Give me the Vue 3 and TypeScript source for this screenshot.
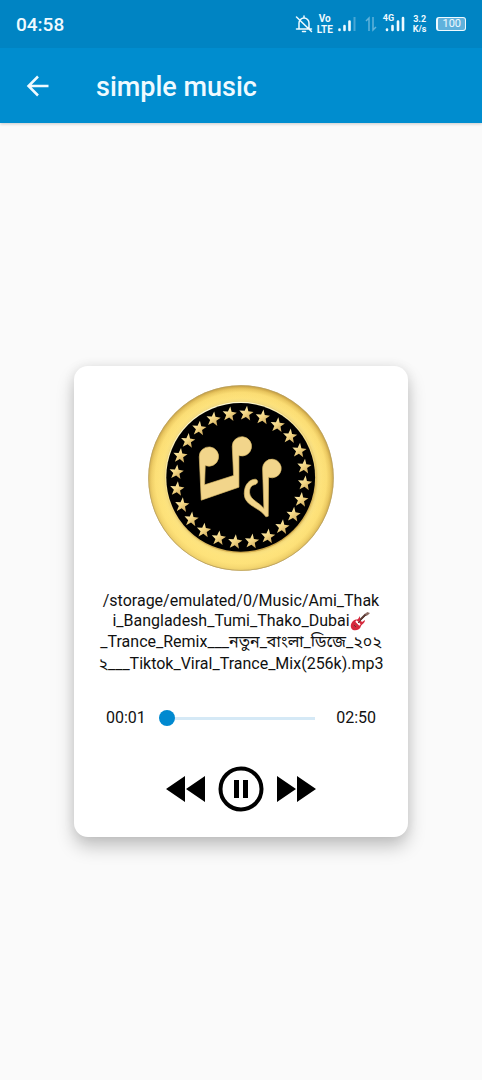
<script setup lang="ts">
import { ref, computed } from 'vue'

const elapsed = ref(1)
const duration = 170
const playing = ref(true)

function clock(total: number): string {
  const minutes = Math.floor(total / 60)
  const seconds = Math.floor(total % 60)
  return String(minutes).padStart(2, '0') + ':' + String(seconds).padStart(2, '0')
}

const elapsedLabel = computed(() => clock(elapsed.value))
const durationLabel = clock(duration)

interface Star {
  x: number
  y: number
}

const stars: Star[] = Array.from({ length: 24 }, (_, i) => {
  const angle = ((5 + i * 15) * Math.PI) / 180
  return {
    x: Math.round(299 + 208 * Math.sin(angle)),
    y: Math.round(298 - 208 * Math.cos(angle)),
  }
})
</script>

<template>
  <div class="screen">
    <header class="top">
      <div class="status">
        <time class="clock">04:58</time>
        <div class="indicators">
          <svg class="bell" width="18" height="18" viewBox="0 0 18 18" aria-label="Notifications muted">
            <path d="M4 14V8a5 5 0 0 1 10 0v6M1.500 14h15M7.500 16.500h3M9 1v2M1.500 2l15 14.500" fill="none" stroke="currentColor" stroke-width="1.500" stroke-linecap="round" />
          </svg>
          <span class="stack volte"><span>Vo</span><span>LTE</span></span>
          <svg width="20" height="16" viewBox="0 0 20 16" aria-label="Signal 1">
            <path d="M2.500 13.500v.5M7.500 10v4M12.500 5.500v8.500" stroke="currentColor" stroke-width="2.600" stroke-linecap="round" />
            <path d="M17.500 1v14" stroke="currentColor" stroke-width="2" opacity="0.300" />
          </svg>
          <svg class="data" width="12" height="16" viewBox="0 0 12 16" aria-label="Mobile data">
            <path d="M4 15V2L1 5M8 1v13l3-3" fill="none" stroke="currentColor" stroke-width="1.500" />
          </svg>
          <span class="cell">
            <span class="gen">4G</span>
            <svg width="20" height="16" viewBox="0 0 20 16" aria-label="Signal 2">
              <path d="M2 13.500v.5M7.500 10v4M13 5.500v8.500M18 2v12" stroke="currentColor" stroke-width="2.600" stroke-linecap="round" />
            </svg>
          </span>
          <span class="stack speed"><span>3.2</span><span>K/s</span></span>
          <span class="battery">100</span>
        </div>
      </div>
      <div class="toolbar">
        <button class="back" type="button" aria-label="Back">
          <svg width="24" height="24" viewBox="0 0 24 24">
            <path d="M22.500 12H3M12 2.500 2.500 12 12 21.500" fill="none" stroke="currentColor" stroke-width="2.500" />
          </svg>
        </button>
        <h1 class="title">simple music</h1>
      </div>
    </header>

    <main class="stage">
      <section class="card">
        <svg class="cover" viewBox="0 0 600 600" role="img" aria-label="Golden music medallion">
          <defs>
            <radialGradient id="rim" cx="300" cy="300" r="300" gradientUnits="userSpaceOnUse">
              <stop offset="0.800" stop-color="#d9b552" />
              <stop offset="0.830" stop-color="#f5dc80" />
              <stop offset="0.860" stop-color="#fde17a" />
              <stop offset="0.920" stop-color="#fbdc72" />
              <stop offset="0.960" stop-color="#e8c45c" />
              <stop offset="1" stop-color="#bd9338" />
            </radialGradient>
            <linearGradient id="glow" x1="0.700" y1="0" x2="0.400" y2="1">
              <stop offset="0" stop-color="#fff0a0" stop-opacity="0" />
              <stop offset="0.500" stop-color="#ffe680" stop-opacity="0.200" />
              <stop offset="1" stop-color="#ffe57f" stop-opacity="0.700" />
            </linearGradient>
            <linearGradient id="lip" x1="0.300" y1="0" x2="0.700" y2="1">
              <stop offset="0" stop-color="#fffbd8" />
              <stop offset="0.450" stop-color="#f6df8a" />
              <stop offset="1" stop-color="#c8a044" />
            </linearGradient>
            <linearGradient id="gold" x1="0" y1="0" x2="1" y2="1">
              <stop offset="0" stop-color="#fff3bd" />
              <stop offset="0.500" stop-color="#f3d684" />
              <stop offset="1" stop-color="#c09a52" />
            </linearGradient>
          </defs>
          <circle cx="300" cy="300" r="299" fill="url(#rim)" />
          <circle cx="300" cy="300" r="298" fill="url(#glow)" stroke="#b4a066" stroke-width="2" />
          <circle cx="299" cy="298" r="244" fill="url(#lip)" />
          <circle cx="299" cy="298" r="240" fill="#000" />
          <path
            v-for="(star, index) in stars"
            :key="index"
            :transform="`translate(${star.x} ${star.y}) rotate(6)`"
            d="M0-24 6-7 23-6 10 5 15 22 0 12-15 22-10 5-23-6-6-7Z"
            fill="url(#gold)"
          />
          <g fill="#f2d58b" stroke="#d9b968" stroke-width="2" transform="matrix(1.075 0 0 1.075 -26 -23)">
            <path d="M178 237A29 29 0 1 1 196 263L194 321 281 293 277 206A29 29 0 1 1 297 233L297 328 184 367Z" />
            <path d="M368 272A28 28 0 1 1 386 298L385 415 378 417C360 388 313 385 313 348 313 320 328 305 346 304 356 306 355 316 347 320 335 321 328 330 329 345 331 366 357 373 372 392Z" />
          </g>
        </svg>

        <p class="path">
          <span class="latin">/storage/emulated/0/Music/Ami_Thak</span>
          <span class="latin">i_Bangladesh_Tumi_Thako_Dubai<svg class="guitar" width="20" height="20" viewBox="0 0 20 20" role="img" aria-label="Guitar">
            <path d="M9 10 16 3" stroke="#5c3a35" stroke-width="2" />
            <path d="M15 4 17 1 20 2 18 4 16 5Z" fill="#8a6a62" />
            <path d="M3 10C5 8 7 9 8 8L10 5 10 9 12 11 15 9C15 12 12 13 11 15 10 19 6 20 3 19 0 17 0 13 3 10Z" fill="#d5283c" />
            <path d="M6 10 10 14" stroke="#fff" stroke-width="2" />
            <path d="M8 12 16 4" stroke="#5c3a35" stroke-width="1" />
            <path d="M4 14 6 16" stroke="#5c3a35" stroke-width="1" />
          </svg></span>
          <span>_Trance_Remix___নতুন_বাংলা_ডিজে_২০২</span>
          <span>২___Tiktok_Viral_Trance_Mix(256k).mp3</span>
        </p>

        <div class="progress">
          <span>{{ elapsedLabel }}</span>
          <input v-model.number="elapsed" class="seek" type="range" min="1" :max="duration" aria-label="Playback position">
          <span>{{ durationLabel }}</span>
        </div>

        <div class="controls">
          <button type="button" aria-label="Rewind">
            <svg width="40" height="28" viewBox="0 0 40 28"><path d="M0 14 19 1V27ZM20 14 39 1V27Z" /></svg>
          </button>
          <button type="button" :aria-label="playing ? 'Pause' : 'Play'" @click="playing = !playing">
            <svg width="46" height="46" viewBox="0 0 46 46">
              <circle cx="23" cy="23" r="20.500" fill="none" stroke="#000" stroke-width="4" />
              <path v-if="playing" d="M16 14h5v18h-5ZM25 14h5v18h-5Z" />
              <path v-else d="M18 13 33 23 18 33Z" />
            </svg>
          </button>
          <button type="button" aria-label="Fast forward">
            <svg width="40" height="28" viewBox="0 0 40 28"><path d="M40 14 21 1V27ZM20 14 1 1V27Z" /></svg>
          </button>
        </div>
      </section>
    </main>
  </div>
</template>

<style>
body {
  background: #fafafa;
}
</style>

<style scoped>
.screen {
  min-height: 100vh;
  display: flex;
  flex-direction: column;
  background: #fafafa;
  color: #111;
  font-family: Roboto, "Noto Sans", "Noto Sans Bengali", sans-serif;
}
.top {
  background: #008dcf;
  color: #effaff;
  box-shadow: 0 1px 3px rgba(0, 0, 0, 0.2);
}
.status {
  height: 48px;
  padding: 0 16px;
  display: flex;
  align-items: center;
  justify-content: space-between;
  background: #0084c3;
}
.clock {
  font-size: 19px;
  font-weight: 500;
}
.indicators {
  display: flex;
  align-items: center;
  gap: 4px;
}
.stack {
  display: flex;
  flex-direction: column;
  align-items: center;
  font-weight: 700;
}
.volte {
  font-size: 10px;
  line-height: 11px;
}
.speed {
  margin: 0 6px 0 4px;
  font-size: 9px;
  line-height: 10px;
}
.data {
  margin: 0 4px;
  opacity: 0.4;
}
.cell {
  position: relative;
  display: flex;
}
.gen {
  position: absolute;
  left: -2px;
  top: -3px;
  font-size: 9px;
  line-height: 10px;
  font-weight: 700;
}
.battery {
  padding: 0 4px;
  border: 1px solid currentColor;
  border-left-width: 2px;
  border-radius: 3px;
  background: #5fb1dc;
  font-size: 11px;
  line-height: 12px;
}
.toolbar {
  height: 75px;
  padding: 0 26px;
  display: flex;
  align-items: center;
  gap: 46px;
}
button {
  padding: 0;
  border: 0;
  background: none;
  color: inherit;
  cursor: pointer;
}
button svg {
  display: block;
}
.title {
  margin: 0;
  padding-top: 2px;
  font-size: 27px;
  line-height: 32px;
  font-weight: 500;
}
.stage {
  flex: 1;
  display: flex;
  align-items: center;
  padding: 0 74px;
}
.card {
  flex: 1;
  min-width: 0;
  padding: 19px 24px 25px;
  display: flex;
  flex-direction: column;
  align-items: center;
  border-radius: 14px;
  background: #fff;
  box-shadow: 0 10px 18px rgba(0, 0, 0, 0.22), 0 0 12px rgba(0, 0, 0, 0.08);
}
.cover {
  width: 186px;
  height: 186px;
}
.path {
  margin: 20px 0 0;
  display: flex;
  flex-direction: column;
  align-items: center;
  font-size: 16px;
  line-height: 22px;
  white-space: nowrap;
}
.path .latin {
  height: 20px;
  line-height: 20px;
}
.guitar {
  vertical-align: -5px;
}
.progress {
  align-self: stretch;
  margin-top: 31px;
  padding: 0 8px;
  display: flex;
  align-items: center;
  gap: 13px;
  font-size: 16px;
  line-height: 24px;
}
.seek {
  flex: 1;
  min-width: 0;
  height: 16px;
  margin: 0;
  appearance: none;
  background: linear-gradient(#d5e9f6, #d5e9f6) center / calc(100% - 16px) 3px no-repeat;
}
.seek::-webkit-slider-thumb {
  appearance: none;
  width: 16px;
  height: 16px;
  border-radius: 50%;
  background: #0089d0;
}
.controls {
  margin-top: 36px;
  display: flex;
  align-items: center;
  gap: 12px;
}
</style>
